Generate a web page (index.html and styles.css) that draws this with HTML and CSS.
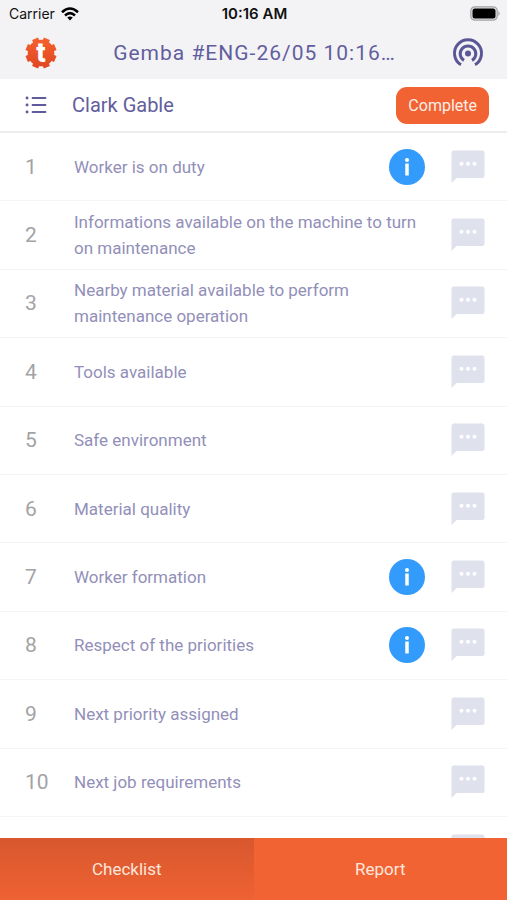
FILE: index.html
```html
<!DOCTYPE html>
<html lang="en">
<head>
<meta charset="utf-8">
<meta name="viewport" content="width=device-width, initial-scale=1">
<title>Gemba checklist</title>
<link rel="stylesheet" href="styles.css">
</head>
<body>
<svg class="defs" aria-hidden="true">
  <symbol id="chat" viewBox="0 0 34 34">
    <path fill="#dfe1ec" d="M3 0.5H31Q33.500 .5 33.500 3V25.500Q33.500 28 31 28H5.500L.5 33V3Q.5 .5 3 .5Z"/>
    <g fill="#fff"><circle cx="10.500" cy="13.800" r="2"/><circle cx="17" cy="13.800" r="2"/><circle cx="23.500" cy="13.800" r="2"/></g>
  </symbol>
  <symbol id="info" viewBox="0 0 36 36">
    <circle cx="18" cy="18" r="18" fill="#339bfb"/>
    <circle cx="18" cy="11" r="2" fill="#fff"/>
    <path d="M18 14.500V26.500" stroke="#fff" stroke-width="3.500"/>
  </symbol>
</svg>
<div class="app">
  <header class="top">
    <div class="status">
      <span class="carrier">Carrier
        <svg width="18" height="14" viewBox="0 0 18 14" fill="none" stroke="#000" stroke-width="2.600"><path d="M1 5.200Q9-2.200 17 5.200"/><path d="M4 8.400Q9 4 14 8.400"/><path d="M9 13.500 6.200 10.600Q9 8.300 11.800 10.600Z" fill="#000" stroke="none"/></svg>
      </span>
      <time class="clock">10:16 AM</time>
      <svg class="battery" width="30" height="15" viewBox="0 0 30 15"><rect x=".8" y=".8" width="26.400" height="13.400" rx="4" fill="#e0e0e2" stroke="#a4a4a6" stroke-width="1.200"/><rect x="2.500" y="2.500" width="23" height="10" rx="2.500"/><path d="M28.300 5Q31 7.500 28.300 10Z" fill="#a4a4a6"/></svg>
    </div>
    <div class="nav">
      <svg width="32" height="32" viewBox="0 0 32 32" role="img" aria-label="Logo">
        <defs><linearGradient id="lg" gradientUnits="userSpaceOnUse" x1="0" y1="0" x2="0" y2="32"><stop stop-color="#f5632f"/><stop offset="1" stop-color="#df4522"/></linearGradient></defs>
        <circle cx="16" cy="16" r="13.300" fill="url(#lg)"/>
        <path stroke="url(#lg)" stroke-width="6.500" d="M21.900 1.700 10.100 30.300M10.100 1.700 21.900 30.300M30.300 10.100 1.700 21.900M30.300 21.900 1.700 10.100"/>
        <text class="logo-letter" x="16" y="25" text-anchor="middle">t</text>
      </svg>
      <h1>Gemba #ENG-26/05 10:16…</h1>
      <button class="icon-button" aria-label="Broadcast">
        <svg width="32" height="32" viewBox="0 0 32 32" fill="none" stroke="#5b5796" stroke-width="3"><circle cx="16" cy="16.500" r="3" fill="#5b5796" stroke="none"/><path d="M9 27.800A13.500 13.500 0 1 1 23 27.800"/><path d="M12 23.400A7.800 7.800 0 1 1 20 23.400"/></svg>
      </button>
    </div>
  </header>
  <div class="subbar">
    <svg width="22" height="18" viewBox="0 0 22 18" stroke="#5f5b9b" stroke-width="1.800" stroke-linecap="round"><path d="M7.500 2H20.500M7.500 9H20.500M7.500 16H20.500"/><path d="M2 2h.1M2 9h.1M2 16h.1" stroke-width="2.800"/></svg>
    <h2>Clark Gable</h2>
    <button class="complete">Complete</button>
  </div>
  <main>
    <ol class="list">
      <li><span class="num">1</span><span class="label">Worker is on duty</span><button class="icon-button" aria-label="Information"><svg width="36" height="36"><use href="#info"/></svg></button><button class="icon-button" aria-label="Comment"><svg width="34" height="34"><use href="#chat"/></svg></button></li>
      <li><span class="num">2</span><span class="label">Informations available on the machine to turn on maintenance</span><button class="icon-button" aria-label="Comment"><svg width="34" height="34"><use href="#chat"/></svg></button></li>
      <li><span class="num">3</span><span class="label">Nearby material available to perform maintenance operation</span><button class="icon-button" aria-label="Comment"><svg width="34" height="34"><use href="#chat"/></svg></button></li>
      <li><span class="num">4</span><span class="label">Tools available</span><button class="icon-button" aria-label="Comment"><svg width="34" height="34"><use href="#chat"/></svg></button></li>
      <li><span class="num">5</span><span class="label">Safe environment</span><button class="icon-button" aria-label="Comment"><svg width="34" height="34"><use href="#chat"/></svg></button></li>
      <li><span class="num">6</span><span class="label">Material quality</span><button class="icon-button" aria-label="Comment"><svg width="34" height="34"><use href="#chat"/></svg></button></li>
      <li><span class="num">7</span><span class="label">Worker formation</span><button class="icon-button" aria-label="Information"><svg width="36" height="36"><use href="#info"/></svg></button><button class="icon-button" aria-label="Comment"><svg width="34" height="34"><use href="#chat"/></svg></button></li>
      <li><span class="num">8</span><span class="label">Respect of the priorities</span><button class="icon-button" aria-label="Information"><svg width="36" height="36"><use href="#info"/></svg></button><button class="icon-button" aria-label="Comment"><svg width="34" height="34"><use href="#chat"/></svg></button></li>
      <li><span class="num">9</span><span class="label">Next priority assigned</span><button class="icon-button" aria-label="Comment"><svg width="34" height="34"><use href="#chat"/></svg></button></li>
      <li><span class="num">10</span><span class="label">Next job requirements</span><button class="icon-button" aria-label="Comment"><svg width="34" height="34"><use href="#chat"/></svg></button></li>
      <li><span class="num"></span><span class="label"></span><button class="icon-button" aria-label="Comment"><svg width="34" height="34"><use href="#chat"/></svg></button></li>
    </ol>
  </main>
  <nav class="tabs">
    <button class="active">Checklist</button>
    <button>Report</button>
  </nav>
</div>
</body>
</html>
```
FILE: styles.css
```css
* { box-sizing: border-box; }
body { margin: 0; font-family: Roboto, sans-serif; background: #fff; }
button { border: 0; padding: 0; background: none; font: inherit; color: inherit; }
svg { display: block; flex: none; }
h1, h2 { margin: 0; font-weight: 400; color: #625e9d; }
.defs { position: absolute; width: 0; height: 0; }
.app { height: 100vh; display: flex; flex-direction: column; }
.top { background: #f3f3f6; }
.status {
  display: grid; grid-template-columns: 1fr auto 1fr; align-items: center;
  height: 27px; padding: 0 7px 0 9px;
  font: 14px Inter, sans-serif; color: #111;
}
.carrier { display: flex; align-items: center; gap: 6px; }
.clock { font-size: 15px; font-weight: 600; }
.battery { justify-self: end; }
.nav { display: flex; align-items: center; height: 52px; padding: 0 23px 0 25px; }
.nav h1 { flex: 1; text-align: center; font-size: 21px; letter-spacing: 1px; white-space: nowrap; }
.icon-button { display: block; flex: none; }
.subbar {
  display: flex; align-items: center; height: 54px; padding: 0 18px 0 25px;
  border-bottom: 2px solid #ececef;
}
.subbar h2 { flex: 1; margin-left: 25px; font-size: 20px; }
.complete {
  height: 37px; padding: 0 12px; border-radius: 11px;
  background: #f26333; color: #fdeee8; font-size: 16px;
}
main { flex: 1; min-height: 0; overflow: hidden; }
.list { list-style: none; margin: 0; padding: 0; }
.list li {
  display: flex; align-items: center; height: 7.6vh; padding: 0 22px 0 25px;
  border-bottom: 1px solid #f4f4f6;
}
.num { width: 49px; font-size: 21px; color: #a3a3a5; }
.label { flex: 1; padding-right: 26px; font-size: 17px; line-height: 26px; color: #928fb9; }
.list .icon-button + .icon-button { margin-left: 26px; }
.tabs { display: flex; height: 62px; background: #f26333; }
.tabs button { flex: 1; color: #fde6dc; font-size: 17px; }
.tabs .active { background: linear-gradient(#d8572e, #ee6233); }
.logo-letter { font: 900 27px Roboto, sans-serif; fill: #fff; }
```
